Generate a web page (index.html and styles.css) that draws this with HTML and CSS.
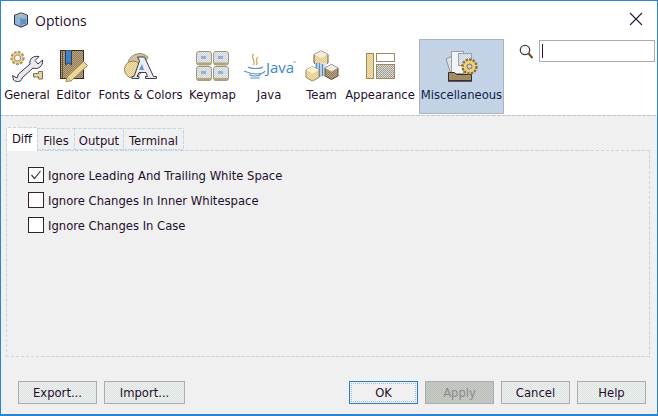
FILE: index.html
```html
<!DOCTYPE html>
<html lang="en">
<head>
    <meta charset="UTF-8">
    <title>Options</title>
    <link rel="stylesheet" href="styles.css">
</head>
<body>
<!-- dither fills shared by the toolbar icons -->
<svg class="defs" width="0" height="0">
    <defs>
        <pattern id="d-brown" width="2" height="2" patternUnits="userSpaceOnUse">
            <rect width="2" height="2" fill="#96794e"/><rect width="1" height="1" fill="#b8a888"/><rect x="1" y="1" width="1" height="1" fill="#b8a888"/>
        </pattern>
        <pattern id="d-cream" width="2" height="2" patternUnits="userSpaceOnUse">
            <rect width="2" height="2" fill="#f3e3ae"/><rect width="1" height="1" fill="#e0c684"/><rect x="1" y="1" width="1" height="1" fill="#e0c684"/>
        </pattern>
        <pattern id="d-grey" width="2" height="2" patternUnits="userSpaceOnUse">
            <rect width="2" height="2" fill="#d8dee6"/><rect width="1" height="1" fill="#a8a08a"/><rect x="1" y="1" width="1" height="1" fill="#9c9478"/>
        </pattern>
        <pattern id="d-key" width="2" height="2" patternUnits="userSpaceOnUse">
            <rect width="2" height="2" fill="#e6ecf2"/><rect width="1" height="1" fill="#c4d2e0"/><rect x="1" y="1" width="1" height="1" fill="#c4d2e0"/>
        </pattern>
    </defs>
</svg>
<div class="window">
    <header class="titlebar">
        <svg class="app-icon" width="16" height="16" viewBox="0 0 16 16">
            <path d="M8 .8 14.500 3.200V12.300L8 15.200 1.500 12.300V3.200Z" fill="#8fb4d4" stroke="#2b2b50" stroke-linejoin="round"/>
            <path d="M2 3.400 8 5.800 14 3.400 8 1.200Z" fill="#aeb6bf"/>
            <path d="M8 6V15" stroke="#5c7894"/>
            <path d="M9 7h4v5H9z" fill="#5f92c2"/>
        </svg>
        <span class="title">Options</span>
        <svg class="close" width="14" height="14" viewBox="0 0 14 14">
            <path d="M1 1 13 13M13 1 1 13" stroke="#2b1a33" stroke-width="1.100"/>
        </svg>
    </header>

    <div class="toolbar">
        <nav class="categories">
            <div class="category cat-general">
                <svg width="34" height="32" viewBox="0 0 34 32">
                    <circle cx="7.500" cy="8" r="6" fill="url(#d-cream)" stroke="#b09a66" stroke-width="2.400" stroke-dasharray="2.600 1.400"/>
                    <circle cx="7.500" cy="8" r="3" fill="#fff" stroke="#a08a5c"/>
                    <path d="M2.500 25.500 7 28 8.500 24 20 14C19 9 23 5.500 29 6.500L25 10.500 28 14 32.500 10C33.500 16 28 20 23 18L12 28C12 32 6 32.500 3.500 30Z" fill="#e8eaee" stroke="#3b3748" stroke-linejoin="round"/>
                    <path d="M23.500 23.500h5v-2h4v7.500h-4v-2h-5z" fill="url(#d-cream)" stroke="#77705e"/>
                </svg>
                <span>General</span>
            </div>
            <div class="category cat-editor">
                <svg width="28" height="32" viewBox="0 0 28 32">
                    <rect x=".5" y=".5" width="23" height="28" fill="url(#d-brown)" stroke="#3a2c28"/>
                    <path d="M2.500 1v27" stroke="#6a5438"/>
                    <path d="M5.500 0h6v15l-3-2.500-3 2.500z" fill="#3f82c6" stroke="#2c3f63"/>
                    <path d="M7 27 23.500 11.500l4 4L11 31l-5 .5z" fill="#ecd596" stroke="#9a8558"/>
                    <path d="M7 27l4 4" stroke="#c4a868"/>
                </svg>
                <span>Editor</span>
            </div>
            <div class="category cat-fonts">
                <svg width="33" height="27" viewBox="0 0 33 27">
                    <path d="M4 10C7 1 18-1 24 5L16 20z" fill="#cfc2a2" stroke="#9c8c66"/>
                    <circle cx="9" cy="17.500" r="8.500" fill="url(#d-cream)" stroke="#8f8058"/>
                    <path d="M13.500 5h7l9 19.500h3v2h-11v-2h2l-1.500-4h-7L13 24.500h2v2H8v-2h2L15.500 9z" fill="#e9edf3" stroke="#3e3a4a" stroke-linejoin="round"/>
                    <path d="M15 18h5l-2-6z" fill="#6f97bd"/>
                </svg>
                <span>Fonts &amp; Colors</span>
            </div>
            <div class="category cat-keymap">
                <svg width="33" height="30" viewBox="0 0 33 30">
                    <g stroke="#a8966c" fill="url(#d-key)">
                        <rect x=".5" y=".5" width="15" height="13.500" rx="2.500"/>
                        <rect x="17.500" y=".5" width="15" height="13.500" rx="2.500"/>
                        <rect x=".5" y="15.500" width="15" height="14" rx="2.500"/>
                        <rect x="17.500" y="15.500" width="15" height="14" rx="2.500"/>
                    </g>
                    <path d="M1 11.500h14v2.500H1zM18 11.500h14v2.500H18zM1 27h14v2.500H1zM18 27h14v2.500H18z" fill="#b3a27c"/>
                    <path d="M5 5h5v3H5zM22 5h5v3h-5zM5 20h5v3H5zM22 20h5v3h-5z" fill="#a4aeb8"/>
                </svg>
                <span>Keymap</span>
            </div>
            <div class="category cat-java">
                <svg width="53" height="26" viewBox="0 0 53 26">
                    <path d="M11 1C6 5 14 7 10 12M15 4C11 7 16 9 13 12" fill="none" stroke="#d0ad6c" stroke-width="1.400"/>
                    <path d="M5 14c3 2 12 2 15 0M1 18c5 2 8 3 12 3s8-1 9-3M6 21.500c3 2 9 2 12 0M7 25h10" fill="none" stroke="#5b93c7" stroke-width="1.200"/>
                    <text class="java-word" x="23" y="20">Java</text>
                    <path d="M50 9h3" stroke="#8fb4d4"/>
                </svg>
                <span>Java</span>
            </div>
            <div class="category cat-team">
                <svg width="34" height="32" viewBox="0 0 34 32">
                    <path d="M9 4.500 16 1 23 4.500V13L16 16.500 9 13Z" fill="url(#d-cream)" stroke="#6a5c3e"/>
                    <path d="M9 4.500 16 8 23 4.500 16 1Z" fill="#f0ece0"/>
                    <path d="M10 13h12v14H10z" fill="#dfe6ee"/>
                    <path d="M11.500 13v14M14.500 13v14M17.500 14v12" stroke="#4f8ac4" stroke-width="1.500"/>
                    <path d="M1 20 7.500 16.500 14 20V27.500L7.500 31 1 27.500Z" fill="url(#d-cream)" stroke="#9a8a5e"/>
                    <path d="M1 20 7.500 23.500 14 20 7.500 16.500Z" fill="#f8f0d4"/>
                    <path d="M20 18 26.500 14.500 33 18V26L26.500 29.500 20 26Z" fill="url(#d-brown)" stroke="#5a5040"/>
                    <path d="M20 18 26.500 21.500 33 18 26.500 14.500Z" fill="#ecebe4"/>
                </svg>
                <span>Team</span>
            </div>
            <div class="category cat-appearance">
                <svg width="29" height="26" viewBox="0 0 29 26">
                    <rect x=".5" y=".5" width="7" height="25" fill="url(#d-cream)" stroke="#a08a5c"/>
                    <rect x="10.500" y=".5" width="18" height="8" fill="#fff" stroke="#a08a5c"/>
                    <rect x="10.500" y="11.500" width="18" height="14" fill="url(#d-grey)" stroke="#a08a5c"/>
                </svg>
                <span>Appearance</span>
            </div>
            <div class="category cat-misc selected">
                <svg width="33" height="32" viewBox="0 0 33 32">
                    <path d="M1 9 8 5.500 12 24H6z" fill="#dfe3e6" stroke="#8f939a"/>
                    <rect x="6.500" y="1.500" width="12" height="22" fill="#f2f4f6" stroke="#9aa0a8"/>
                    <rect x="13.500" y="3.500" width="13" height="12" fill="url(#d-key)" stroke="#9aa0a8"/>
                    <path d="M3.500 22.500h6l2 2h15v6h-23z" fill="#a08d62" stroke="#3a2a34"/>
                    <path d="M3 31h24" stroke="#3a2a34" stroke-width="1.500"/>
                    <circle cx="24.500" cy="16.500" r="7" fill="#ecd083" stroke="#8a6f30" stroke-width="2.400" stroke-dasharray="2.400 1.200"/>
                    <circle cx="24.500" cy="16.500" r="5.500" fill="#ecd083"/>
                    <circle cx="24.500" cy="16.500" r="2.500" fill="#c8d0d8" stroke="#8a6f30"/>
                </svg>
                <span>Miscellaneous</span>
            </div>
        </nav>
        <div class="search">
            <svg width="14" height="15" viewBox="0 0 14 15">
                <circle cx="6" cy="6" r="4.700" fill="#f4f6f8" stroke="#4a4036" stroke-width="1.300"/>
                <path d="M9.500 9.500 13.500 14" stroke="#6b4f2c" stroke-width="2"/>
            </svg>
            <div class="search-box"><i class="caret"></i></div>
        </div>
    </div>

    <main class="content">
        <div class="tabs">
            <div class="tab tab-diff active">Diff</div>
            <div class="tab tab-files">Files</div>
            <div class="tab tab-output">Output</div>
            <div class="tab tab-terminal">Terminal</div>
        </div>
        <div class="panel">
            <label class="check-row">
                <span class="box">
                    <svg width="16" height="16" viewBox="0 0 16 16"><path d="M3.500 8 6.500 11.500 12.500 4" fill="none" stroke="#3c3c3c" stroke-width="1.200"/></svg>
                </span>
                Ignore Leading And Trailing White Space
            </label>
            <label class="check-row"><span class="box"></span>Ignore Changes In Inner Whitespace</label>
            <label class="check-row"><span class="box"></span>Ignore Changes In Case</label>
        </div>
    </main>

    <footer class="buttons">
        <div class="group">
            <button class="btn btn-export">Export...</button>
            <button class="btn btn-import">Import...</button>
        </div>
        <div class="group">
            <button class="btn btn-main focused">OK</button>
            <button class="btn btn-main disabled">Apply</button>
            <button class="btn btn-main">Cancel</button>
            <button class="btn btn-main">Help</button>
        </div>
    </footer>
</div>
</body>
</html>
```

FILE: styles.css
```css
:root {
    /* tight dashes, a plain dashed border leaves gaps that are too wide */
    --dash-blue: repeating-linear-gradient(45deg, #c4d5e6 0 2.800px, #f4f6f8 2.800px 3.540px);
}

* {
    margin: 0;
    padding: 0;
    box-sizing: border-box;
}

body {
    width: 658px;
    height: 416px;
    overflow: hidden;
    font-family: "DejaVu Sans", sans-serif;
    font-size: 11.6px;
    color: #1e0f2d;
}

.defs {
    display: block;
}

.window {
    width: 658px;
    height: 416px;
    display: flex;
    flex-direction: column;
    background: #f0f0f0;
    border: 1px solid #2a84d2;
    border-bottom-width: 2px;
}

/* title */
.titlebar {
    flex: none;
    height: 38px;
    display: flex;
    align-items: center;
    padding: 0 14px 0 12px;
    background: #fff;
}

.title {
    margin-left: 6px;
    font-size: 14px;
    font-family: "Open Sans", sans-serif;
}

.close {
    margin-left: auto;
    margin-bottom: 2px;
}

/* toolbar */
.toolbar {
    flex: none;
    height: 77px;
    display: flex;
    background: #fff;
    border-bottom: 1px solid #c4c4c4;
    border-image: repeating-linear-gradient(90deg, #c4c4c4 0 4px, #f0f0f0 4px 5px) 1;
}

.categories {
    display: flex;
    align-items: flex-start;
    padding-left: 1px;
}

.category {
    height: 75px;
    display: flex;
    flex-direction: column;
    align-items: center;
    justify-content: flex-end;
    padding-bottom: 12px;
    white-space: nowrap;
}

.category svg {
    margin-bottom: 6px;
}

.cat-general { width: 50px; }
.cat-editor { width: 43px; }
.cat-fonts { width: 91px; }
.cat-keymap { width: 53px; }
.cat-java { width: 60px; }
.cat-team { width: 45px; }
.cat-appearance { width: 72px; }

.cat-fonts svg,
.cat-java svg,
.cat-appearance svg {
    margin-bottom: 9px;
}

.cat-keymap svg {
    margin-bottom: 7px;
}

.selected {
    width: 85px;
    margin-left: 3px;
    background: #c3d3e5;
    border: 1px solid #a9b3bd;
    color: #0d1e4a;
    padding-bottom: 11px;
}

.search {
    display: flex;
    align-items: flex-start;
    gap: 6px;
    margin-left: 15px;
    padding-top: 1px;
}

.search svg {
    margin-top: 4px;
}

.search-box {
    width: 116px;
    height: 22px;
    background: #fff;
    border: 1px solid #a9adb2;
    padding: 3px 2px;
}

.caret {
    display: block;
    width: 1px;
    height: 14px;
    background: #3c1030;
}

/* tabs */
.content {
    flex: none;
    height: 241px;
    padding: 11px 0 0 5px;
    display: flex;
    flex-direction: column;
}

.tabs {
    display: flex;
    height: 23px;
    flex: none;
}

.tab {
    height: 22px;
    margin-top: 1px;
    padding-top: 5px;
    text-align: center;
    border: 1px solid #c4d5e6;
    border-left: 0;
    border-image: var(--dash-blue) 1;
}

.tab.active {
    height: 24px;
    margin-top: 0;
    padding-top: 4px;
    position: relative;
    background: #fff;
    border-left: 1px solid #c4d5e6;
    border-bottom: 0;
}

.tab-diff { width: 32px; }
.tab-files { width: 37px; }
.tab-output { width: 49px; }
.tab-terminal { width: 60px; }

.panel {
    width: 644px;
    height: 207px;
    flex: none;
    border: 1px solid #c4d5e6;
    border-image: var(--dash-blue) 1;
    padding: 16px 0 0 21px;
    display: flex;
    flex-direction: column;
    gap: 9px;
}

.check-row {
    height: 16px;
    line-height: 18px;
    display: flex;
    align-items: flex-start;
    gap: 4px;
    white-space: nowrap;
}

.box {
    width: 16px;
    height: 16px;
    background: #fff;
    border: 1px solid #33202f;
    display: block;
}

.box svg {
    display: block;
    margin: -1px;
}

/* buttons */
.buttons {
    flex: none;
    display: flex;
    justify-content: space-between;
    padding: 24px 11px 0 17px;
    height: 57px;
}

.group {
    display: flex;
    gap: 7px;
}

.btn {
    height: 23px;
    font-family: inherit;
    font-size: 11.6px;
    color: inherit;
    background: repeating-conic-gradient(#f3f0e4 0 25%, #d8e2ec 0 50%) 0 0 / 2px 2px;
    border: 1px solid #a9adb2;
}

.btn-export {
    width: 79px;
}

.btn-import {
    width: 81px;
}

.btn-main {
    width: 69px;
}

.focused {
    background: #f0f0f0;
    border-color: #2a7cc4;
    outline: 1px dotted #9cc0e0;
    outline-offset: -3px;
}

.disabled {
    background: repeating-conic-gradient(#d8cfae 0 25%, #a9bcd0 0 50%) 0 0 / 2px 2px;
    color: #8b8b8b;
}

.java-word {
    font-family: "Open Sans", sans-serif;
    font-size: 15px;
    fill: #3f86c8;
}
```
